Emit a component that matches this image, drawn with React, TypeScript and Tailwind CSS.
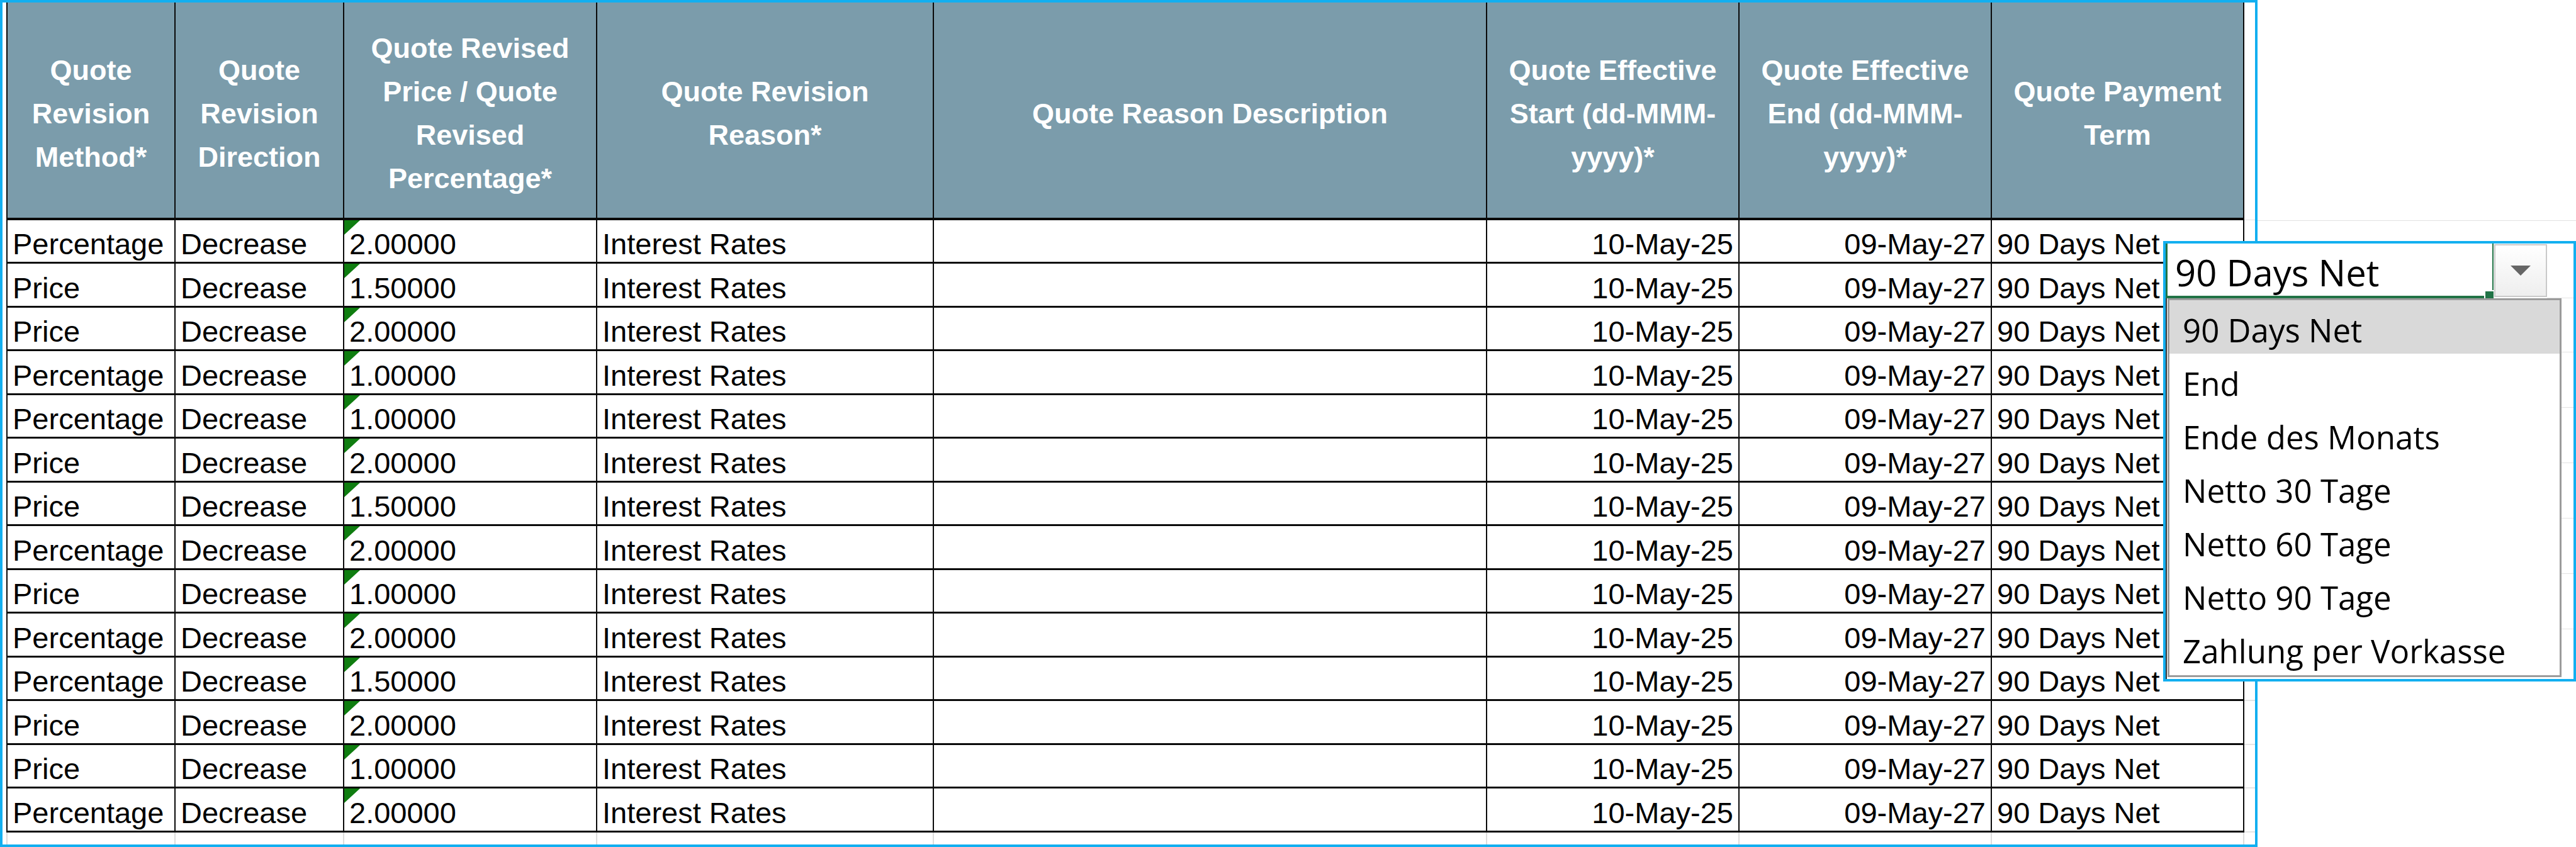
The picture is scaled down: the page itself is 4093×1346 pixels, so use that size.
import React from 'react';

type QuoteRow = { method: string; value: string };

const rows: QuoteRow[] = [
  { method: 'Percentage', value: '2.00000' },
  { method: 'Price', value: '1.50000' },
  { method: 'Price', value: '2.00000' },
  { method: 'Percentage', value: '1.00000' },
  { method: 'Percentage', value: '1.00000' },
  { method: 'Price', value: '2.00000' },
  { method: 'Price', value: '1.50000' },
  { method: 'Percentage', value: '2.00000' },
  { method: 'Price', value: '1.00000' },
  { method: 'Percentage', value: '2.00000' },
  { method: 'Percentage', value: '1.50000' },
  { method: 'Price', value: '2.00000' },
  { method: 'Price', value: '1.00000' },
  { method: 'Percentage', value: '2.00000' },
];

const headers: string[][] = [
  ['Quote', 'Revision', 'Method*'],
  ['Quote', 'Revision', 'Direction'],
  ['Quote Revised', 'Price / Quote', 'Revised', 'Percentage*'],
  ['Quote Revision', 'Reason*'],
  ['Quote Reason Description'],
  ['Quote Effective', 'Start (dd-MMM-', 'yyyy)*'],
  ['Quote Effective', 'End (dd-MMM-', 'yyyy)*'],
  ['Quote Payment', 'Term'],
];

const options = [
  '90 Days Net',
  'End',
  'Ende des Monats',
  'Netto 30 Tage',
  'Netto 60 Tage',
  'Netto 90 Tage',
  'Zahlung per Vorkasse',
];

const GRID = 'grid grid-cols-[267px_268px_402px_535px_879px_401px_401px_403px_17px]';

const cell = 'border-l-2 border-b-[3px] border-[#0a0a0a] flex items-end pb-[2px] px-[8px] text-[47px] leading-[52px] whitespace-nowrap overflow-hidden';

const ErrorMark = () => (
  <svg width="25" height="23" viewBox="0 0 25 23" className="absolute left-0 top-0">
    <polygon points="0,0 25,0 0,23" fill="#0f7d10" />
  </svg>
);

const DataRow: React.FC<{ row: QuoteRow; index: number }> = ({ row, index }) => (
  <div className={`${GRID} ${index % 2 === 0 ? 'h-[69px]' : 'h-[70px]'}`}>
    <div className={cell}>{row.method}</div>
    <div className={cell}>Decrease</div>
    <div className={`${cell} relative`}>
      <ErrorMark />
      {row.value}
    </div>
    <div className={cell}>Interest Rates</div>
    <div className={cell}></div>
    <div className={`${cell} justify-end`}>10-May-25</div>
    <div className={`${cell} justify-end`}>09-May-27</div>
    <div className={`${cell} border-r-2`}>90 Days Net</div>
    <div className="border-b-2 border-[#e4e4e4]"></div>
  </div>
);

const PaymentDropdown = () => (
  <div className="absolute left-[3437px] top-[383px] w-[656px] h-[700px] border-4 border-[#12aff0] bg-white flex flex-col font-['Open_Sans',sans-serif] text-black">
    <div className="flex h-[87px]">
      <div className="relative w-[521px] h-[87px] border-l-[3px] border-r-2 border-b-4 border-[#217346] pt-[4px] pl-[12px] text-[58px] leading-[84px] whitespace-nowrap">
        90 Days Net
        <div className="absolute right-[-2px] bottom-[-4px] w-[15px] h-[13px] bg-[#217346] border-l-2 border-t-2 border-white"></div>
      </div>
      <div className="ml-[1px] mt-[1px] w-[84px] h-[84px] border-2 border-[#c9c9c9] bg-gradient-to-b from-white to-[#eeeeee] flex items-center justify-center">
        <svg width="32" height="16" viewBox="0 0 32 16">
          <polygon points="0,0 32,0 16,16" fill="#666666" />
        </svg>
      </div>
      <div className="flex-1 border-b border-[#e2e2e2]"></div>
    </div>
    <div className="flex flex-1">
      <div className="w-[3px] border-l-2 border-[#333]"></div>
      <div className="w-[626px] h-[602px] border-[3px] border-[#9b9b9b] bg-white flex flex-col">
        {options.map((opt, i) => (
          <div
            key={opt}
            className={`h-[85px] pt-[5px] pl-[21px] text-[51px] leading-[85px] whitespace-nowrap ${i === 0 ? 'bg-[#d9d9d9]' : ''}`}
          >
            {opt}
          </div>
        ))}
      </div>
      <div className="flex-1 flex flex-col">
        <div className="h-[86px] border-b border-[#e2e2e2]"></div>
        <div className="h-[88px] border-b border-[#e2e2e2]"></div>
        <div className="h-[88px] border-b border-[#e2e2e2]"></div>
        <div className="h-[88px] border-b border-[#e2e2e2]"></div>
        <div className="h-[88px] border-b border-[#e2e2e2]"></div>
        <div className="h-[88px] border-b border-[#e2e2e2]"></div>
      </div>
    </div>
  </div>
);

export default function App() {
  return (
    <div className="relative flex w-[4093px] h-[1346px] bg-white overflow-hidden font-['Liberation_Sans',Arial,sans-serif] text-black">
      <div className="w-[3587px] h-[1346px] shrink-0 border-4 border-[#12aff0] pl-[6px] flex flex-col">
        <div className={`${GRID} h-[346px]`}>
          {headers.map((lines, i) => (
            <div
              key={i}
              className={`bg-[#7b9cab] border-l-2 border-b-4 border-[#0a0a0a] pt-[10px] flex flex-col items-center justify-center text-white font-bold text-[45px] leading-[69px] whitespace-nowrap ${i === 7 ? 'border-r-2' : ''}`}
            >
              {lines.map((l) => (
                <span key={l}>{l}</span>
              ))}
            </div>
          ))}
          <div className="border-b border-[#e2e2e2]"></div>
        </div>
        {rows.map((r, i) => (
          <DataRow key={i} row={r} index={i} />
        ))}
        <div className={`${GRID} h-[19px]`}>
          <div className="border-l-2 border-[#dcdcdc]"></div>
          <div className="border-l-2 border-[#dcdcdc]"></div>
          <div className="border-l-2 border-[#dcdcdc]"></div>
          <div className="border-l-2 border-[#dcdcdc]"></div>
          <div className="border-l-2 border-[#dcdcdc]"></div>
          <div className="border-l-2 border-[#dcdcdc]"></div>
          <div className="border-l-2 border-[#dcdcdc]"></div>
          <div className="border-l-2 border-r-2 border-[#dcdcdc]"></div>
          <div></div>
        </div>
      </div>
      <div className="flex-1">
        <div className="h-[351px] border-b border-[#e2e2e2]"></div>
      </div>
      <PaymentDropdown />
    </div>
  );
}
